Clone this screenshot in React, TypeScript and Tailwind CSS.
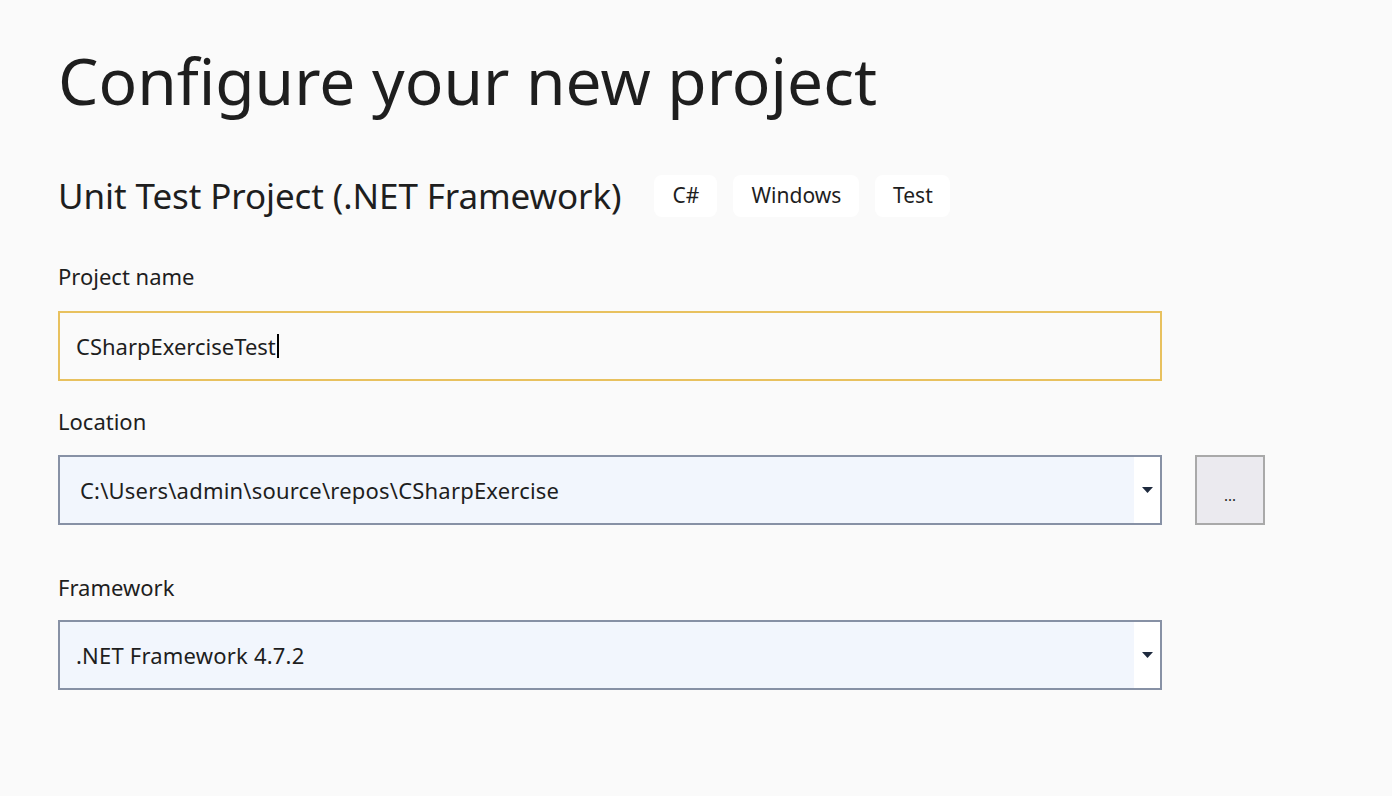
import React from "react";

const font = { fontFamily: '"Noto Sans", "Open Sans", sans-serif' };

function Combo({ value, textPad }: { value: string; textPad: string }) {
  return (
    <div className="flex h-[70px] w-[1104px] border-2 border-[#8791a5] bg-[#f2f6fd]">
      <div className={`flex flex-1 items-center ${textPad} text-[22px] tracking-[0.2px] text-[#1e1e1e]`}>{value}</div>
      <div className="flex w-[26px] items-center justify-center bg-white">
        <svg width="11" height="6" viewBox="0 0 11 6">
          <path d="M0 0 H11 L5.5 6 Z" fill="#1e2a3e" />
        </svg>
      </div>
    </div>
  );
}

export default function App() {
  return (
    <div className="h-[796px] w-[1392px] bg-[#fafafa] pl-[58px]" style={font}>
      <div className="pt-[36px]">
        <h1 className="h-[90px] text-[64px] leading-[90px] text-[#1e1e1e]">Configure your new project</h1>
      </div>
      <div className="mt-[49px] flex h-[42px] items-center">
        <div className="text-[35px] leading-[42px] tracking-[-0.1px] text-[#1e1e1e]">Unit Test Project (.NET Framework)</div>
        <div className="ml-[33px] flex gap-[16px]">
          <span className="flex h-[42px] w-[63px] items-center justify-center rounded-[8px] bg-white text-[21px] text-[#1e1e1e]">C#</span>
          <span className="flex h-[42px] w-[126px] items-center justify-center rounded-[8px] bg-white text-[21px] text-[#1e1e1e]">Windows</span>
          <span className="flex h-[42px] w-[75px] items-center justify-center rounded-[8px] bg-white text-[21px] text-[#1e1e1e]">Test</span>
        </div>
      </div>
      <div className="mt-[45px] h-[28px] text-[22px] leading-[28px] text-[#1e1e1e]">Project name</div>
      <div className="mt-[21px] flex h-[70px] w-[1104px] items-center border-2 border-[#e8c15e] bg-[#fafafa] pl-[16px]">
        <span className="text-[22px] text-[#1e1e1e]">CSharpExerciseTest</span>
        <span className="ml-[1px] h-[24px] w-[2px] bg-black" />
      </div>
      <div className="mt-[26px] h-[28px] text-[22px] leading-[28px] text-[#1e1e1e]">Location</div>
      <div className="mt-[20px] flex items-center gap-[33px]">
        <Combo value="C:\Users\admin\source\repos\CSharpExercise" textPad="pl-[20px]" />
        <button className="flex h-[70px] w-[70px] items-center justify-center border-2 border-[#a9a9a9] bg-[#ebeaef] pt-[10px] text-[15px] text-[#1e1e1e]">
          ...
        </button>
      </div>
      <div className="mt-[48px] h-[28px] text-[22px] leading-[28px] text-[#1e1e1e]">Framework</div>
      <div className="mt-[19px]">
        <Combo value=".NET Framework 4.7.2" textPad="pl-[16px]" />
      </div>
    </div>
  );
}
